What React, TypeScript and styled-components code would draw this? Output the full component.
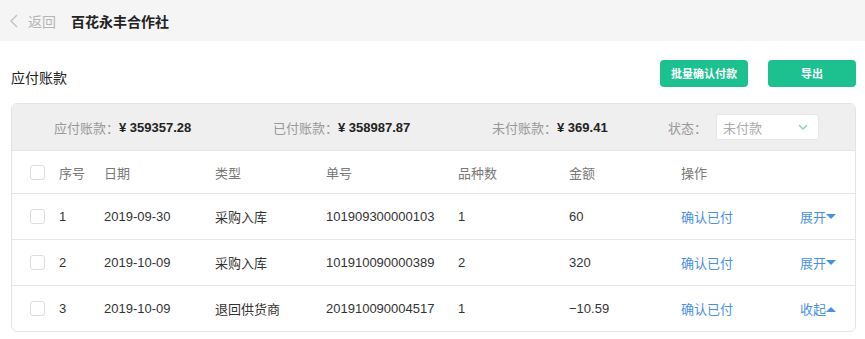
import React from 'react'
import styled, { createGlobalStyle } from 'styled-components'

const GlobalStyle = createGlobalStyle`
  body {
    margin: 0;
    background: #fff;
    font-family: "Liberation Sans", "Noto Sans CJK SC", sans-serif;
    color: #333;
  }
`

const TopBar = styled.div`
  display: flex;
  align-items: center;
  height: 41px;
  padding-left: 10px;
  background: #f5f5f5;
`
const BackLink = styled.span`
  display: flex;
  align-items: center;
  gap: 10px;
  color: #b5b5b5;
  font-size: 14px;
  margin-right: 15px;
`
const PageTitle = styled.span`
  font-size: 14px;
  font-weight: bold;
  color: #222;
`
const Body = styled.div`
  padding: 18px 9px 0 11px;
`
const SectionHead = styled.div`
  display: flex;
  align-items: center;
  justify-content: space-between;
  height: 28px;
  margin-bottom: 16px;
`
const SectionTitle = styled.div`
  font-size: 14px;
  color: #222;
  padding-top: 8px;
`
const Actions = styled.div`
  display: flex;
  gap: 20px;
`
const GreenButton = styled.button`
  width: 88px;
  height: 27px;
  border: none;
  border-radius: 4px;
  background: #1dc18f;
  color: #fff;
  font-family: inherit;
  font-size: 11px;
  font-weight: bold;
  padding: 0;
`
const Panel = styled.div`
  border: 1px solid #e4e4e4;
  border-radius: 6px;
  overflow: hidden;
`
const Summary = styled.div`
  display: flex;
  align-items: center;
  height: 46px;
  padding-left: 42px;
  background: #efefef;
  border-bottom: 1px solid #e4e4e4;
  font-size: 13px;
`
const SummaryItem = styled.div<{ w: number }>`
  width: ${p => p.w}px;
  display: flex;
  align-items: center;
`
const Label = styled.span`
  color: #999;
`
const Amount = styled.span`
  color: #222;
  font-weight: bold;
`
const Select = styled.div`
  width: 103px;
  height: 26px;
  box-sizing: border-box;
  margin-left: 9px;
  padding: 0 10px 0 6px;
  display: flex;
  align-items: center;
  justify-content: space-between;
  background: #fff;
  border: 1px solid #e6e6e6;
  border-radius: 3px;
  color: #aaa;
`
const Row = styled.div<{ head?: boolean }>`
  display: grid;
  grid-template-columns: 29px 45px 111px 111px 132px 111px 112px 119px 1fr;
  align-items: center;
  height: ${p => (p.head ? 42 : 45)}px;
  padding-left: 18px;
  font-size: 13px;
  color: ${p => (p.head ? '#777' : '#333')};
  & + & {
    border-top: 1px solid #e6e6e6;
  }
`
const Checkbox = styled.span`
  width: 13px;
  height: 13px;
  border: 1px solid #ddd;
  border-radius: 3px;
  background: #fff;
`
const Link = styled.span`
  color: #4a90e2;
  display: flex;
  align-items: center;
`

const Triangle = ({ up }: { up?: boolean }) => (
  <svg width="10" height="6" viewBox="0 0 10 6">
    <path d={up ? 'M0 6 L5 1 L10 6 Z' : 'M0 0 L10 0 L5 5 Z'} fill="#4a90e2" />
  </svg>
)

const rows = [
  { no: 1, date: '2019-09-30', type: '采购入库', code: '101909300000103', kinds: 1, amount: '60', open: false },
  { no: 2, date: '2019-10-09', type: '采购入库', code: '101910090000389', kinds: 2, amount: '320', open: false },
  { no: 3, date: '2019-10-09', type: '退回供货商', code: '201910090004517', kinds: 1, amount: '−10.59', open: true },
]

const App: React.FC = () => (
  <>
    <GlobalStyle />
    <TopBar>
      <BackLink>
        <svg width="8" height="14" viewBox="0 0 8 14">
          <path d="M7 1 L1 7 L7 13" stroke="#c4c4c4" strokeWidth="1.5" fill="none" />
        </svg>
        返回
      </BackLink>
      <PageTitle>百花永丰合作社</PageTitle>
    </TopBar>
    <Body>
      <SectionHead>
        <SectionTitle>应付账款</SectionTitle>
        <Actions>
          <GreenButton>批量确认付款</GreenButton>
          <GreenButton>导出</GreenButton>
        </Actions>
      </SectionHead>
      <Panel>
        <Summary>
          <SummaryItem w={219}>
            <Label>应付账款：</Label>
            <Amount>¥ 359357.28</Amount>
          </SummaryItem>
          <SummaryItem w={219}>
            <Label>已付账款：</Label>
            <Amount>¥ 358987.87</Amount>
          </SummaryItem>
          <SummaryItem w={176}>
            <Label>未付账款：</Label>
            <Amount>¥ 369.41</Amount>
          </SummaryItem>
          <SummaryItem w={160}>
            <Label>状态：</Label>
            <Select>
              未付款
              <svg width="10" height="6" viewBox="0 0 10 6">
                <path d="M1 1 L5 5 L9 1" stroke="#7fd6c0" strokeWidth="1.3" fill="none" />
              </svg>
            </Select>
          </SummaryItem>
        </Summary>
        <Row head>
          <Checkbox />
          <span>序号</span>
          <span>日期</span>
          <span>类型</span>
          <span>单号</span>
          <span>品种数</span>
          <span>金额</span>
          <span>操作</span>
          <span />
        </Row>
        {rows.map(r => (
          <Row key={r.no}>
            <Checkbox />
            <span>{r.no}</span>
            <span>{r.date}</span>
            <span>{r.type}</span>
            <span>{r.code}</span>
            <span>{r.kinds}</span>
            <span>{r.amount}</span>
            <Link>确认已付</Link>
            <Link>
              {r.open ? '收起' : '展开'}
              <Triangle up={r.open} />
            </Link>
          </Row>
        ))}
      </Panel>
    </Body>
  </>
)

export default App
